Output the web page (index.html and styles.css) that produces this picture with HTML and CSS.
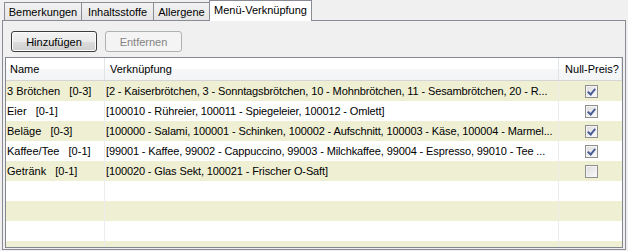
FILE: index.html
```html
<!DOCTYPE html>
<html>
<head>
<meta charset="utf-8">
<link rel="stylesheet" href="styles.css">
</head>
<body>
<div class="tabs">
  <div class="tab t1">Bemerkungen</div>
  <div class="tab t2">Inhaltsstoffe</div>
  <div class="tab t3">Allergene</div>
  <div class="tab active t4">Menü-Verknüpfung</div>
</div>
<div class="panel">
  <div class="toolbar">
    <button class="btn default">Hinzufügen</button>
    <button class="btn disabled">Entfernen</button>
  </div>
  <div class="grid">
    <div class="row head">
      <div class="c name">Name</div>
      <div class="c link">Verknüpfung</div>
      <div class="c np">Null-Preis?</div>
    </div>
    <div class="row alt">
      <div class="c name">3 Brötchen   [0-3]</div>
      <div class="c link">[2 - Kaiserbrötchen, 3 - Sonntagsbrötchen, 10 - Mohnbrötchen, 11 - Sesambrötchen, 20 - R...</div>
      <div class="c np"><span class="cb on"></span></div>
    </div>
    <div class="row">
      <div class="c name">Eier   [0-1]</div>
      <div class="c link">[100010 - Rühreier, 100011 - Spiegeleier, 100012 - Omlett]</div>
      <div class="c np"><span class="cb on"></span></div>
    </div>
    <div class="row alt">
      <div class="c name">Beläge   [0-3]</div>
      <div class="c link">[100000 - Salami, 100001 - Schinken, 100002 - Aufschnitt, 100003 - Käse, 100004 - Marmel...</div>
      <div class="c np"><span class="cb on"></span></div>
    </div>
    <div class="row">
      <div class="c name">Kaffee/Tee   [0-1]</div>
      <div class="c link">[99001 - Kaffee, 99002 - Cappuccino, 99003 - Milchkaffee, 99004 - Espresso, 99010 - Tee ...</div>
      <div class="c np"><span class="cb on"></span></div>
    </div>
    <div class="row alt">
      <div class="c name">Getränk   [0-1]</div>
      <div class="c link">[100020 - Glas Sekt, 100021 - Frischer O-Saft]</div>
      <div class="c np"><span class="cb"></span></div>
    </div>
    <div class="row"><div class="c name"></div><div class="c link"></div><div class="c np"></div></div>
    <div class="row alt"><div class="c name"></div><div class="c link"></div><div class="c np"></div></div>
    <div class="row"><div class="c name"></div><div class="c link"></div><div class="c np"></div></div>
    <div class="row alt"><div class="c name"></div><div class="c link"></div><div class="c np"></div></div>
  </div>
</div>
</body>
</html>
```
FILE: styles.css
```css
* { box-sizing: border-box; }
html, body { margin: 0; padding: 0; }
body {
  background: #f0f0f0;
  font-family: "Liberation Sans", Arial, sans-serif;
  font-size: 11px;
  color: #000;
  width: 628px;
  height: 251px;
  overflow: hidden;
}
.tabs {
  display: flex;
  align-items: flex-end;
  height: 20px;
  padding-left: 4px;
  position: relative;
  z-index: 2;
}
.tab {
  height: 18px;
  border: 1px solid #898c95;
  border-bottom: none;
  background: linear-gradient(#f2f2f2, #e4e4e4);
  margin-right: -1px;
  display: flex;
  align-items: center;
  justify-content: center;
  padding-top: 1px;
}
.t1 { width: 78px; }
.t2 { width: 73px; }
.t3 { width: 57px; }
.t4 { width: 103px; }
.tab.active {
  background: #fff;
  height: 21px;
  margin-bottom: -1px;
  padding-top: 0;
  padding-bottom: 3px;
}
.panel {
  margin-left: 2px;
  width: 624px;
  height: 230px;
  border: 1px solid #898c95;
  background: #f0f0f0;
  padding: 10px 2px 1px 2px;
}
.toolbar {
  display: flex;
  gap: 8px;
  padding-left: 6px;
  height: 21px;
}
.btn {
  font: inherit;
  height: 21px;
  border-radius: 3px;
  padding: 0;
  margin: 0;
}
.btn.default {
  width: 86px;
  border: 1px solid #3c3c3c;
  background: linear-gradient(#f2f2f2 0%, #ebebeb 50%, #dddddd 51%, #cfcfcf 100%);
  box-shadow: inset 0 0 0 1px #fcfcfc;
  color: #000;
}
.btn.disabled {
  width: 77px;
  border: 1px solid #adb2b5;
  background: #f4f4f4;
  color: #838383;
}
.grid {
  margin-top: 5px;
  height: 191px;
  border: 1px solid #828790;
  background: #fff;
  overflow: hidden;
}
.row {
  display: grid;
  grid-template-columns: 99px 454px 63px;
  height: 20px;
}
.row.alt { background: #efefd3; }
.row.head {
  height: 23px;
  background: linear-gradient(#ffffff 0%, #ffffff 50%, #f6f7f8 51%, #f3f4f5 100%);
  border-bottom: 1px solid #d5d5d5;
}
.c {
  border-right: 1px solid #ececec;
  white-space: pre;
  overflow: hidden;
  display: flex;
  align-items: center;
  padding-left: 1px;
}
.c.link { letter-spacing: -0.12px; }
.c.np { border-right: none; justify-content: center; }
.head .c { padding-left: 4px; border-right: 1px solid #e3e4e6; }
.head .link { padding-left: 5px; letter-spacing: 0; }
.head .np { justify-content: center; padding-left: 4px; }
.cb {
  width: 13px;
  height: 13px;
  border: 1px solid #8f8f8f;
  background: linear-gradient(135deg, #dcdcdc, #fbfbfb);
  box-shadow: inset 0 0 0 1px #f4f4f4;
  display: block;
  position: relative;
  margin-left: 1px;
}
.cb.on::after {
  content: "";
  position: absolute;
  left: 3px;
  top: 1px;
  width: 3px;
  height: 6px;
  border-right: 2px solid #4a5f97;
  border-bottom: 2px solid #4a5f97;
  transform: rotate(40deg);
}
```
